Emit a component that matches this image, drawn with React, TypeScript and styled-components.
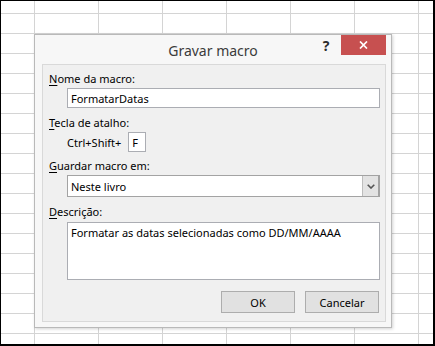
import styled, { createGlobalStyle } from "styled-components";

const GlobalStyle = createGlobalStyle`
  html, body {
    margin: 0;
    padding: 0;
    background: #ffffff;
  }
  body {
    font-family: "Noto Sans", "Open Sans", Arial, sans-serif;
    font-size: 11px;
    color: #000;
  }
`;

const Sheet = styled.div`
  box-sizing: border-box;
  width: 435px;
  height: 346px;
  border-style: solid;
  border-color: #000;
  border-width: 1px 2px 2px 1px;
  padding: 33px 0 0 33px;
  background-color: #fff;
  background-image: linear-gradient(to right, #d4d4d4 1px, transparent 1px),
    linear-gradient(to bottom, #d4d4d4 1px, transparent 1px);
  background-size: 64px 20px;
  background-position: 33px 12px;
  overflow: hidden;
`;

const Dialog = styled.div`
  box-sizing: border-box;
  width: 358px;
  height: 294px;
  display: flex;
  flex-direction: column;
  background: #f7f7f7;
  border: 1px solid #b9b9b9;
  box-shadow: 1px 1px 3px rgba(0, 0, 0, 0.18);
`;

const TitleBar = styled.div`
  height: 29px;
  display: grid;
  grid-template-columns: 1fr auto 1fr;
  align-items: start;
`;

const Title = styled.div`
  grid-column: 2;
  padding-top: 6px;
  font-size: 14px;
  line-height: 20px;
  color: #3b3b3b;
`;

const TitleControls = styled.div`
  grid-column: 3;
  display: flex;
  justify-content: flex-end;
  align-items: flex-start;
  padding-right: 5px;
`;

const HelpButton = styled.div`
  width: 16px;
  margin-right: 7px;
  padding-top: 3px;
  text-align: center;
  font-size: 14px;
  font-weight: bold;
  line-height: 16px;
  color: #2b2b2b;
`;

const CloseButton = styled.div`
  width: 45px;
  height: 20px;
  display: flex;
  align-items: center;
  justify-content: center;
  background: #c75050;
`;

const Panel = styled.div`
  box-sizing: border-box;
  width: 344px;
  height: 258px;
  margin: 0 5px 5px 7px;
  padding: 6px 5px 8px 6px;
  display: flex;
  flex-direction: column;
  background: #f0f0f0;
  border: 1px solid #d9d9d9;
`;

const Label = styled.div<{ $gap: number }>`
  margin-top: ${(p) => p.$gap}px;
  line-height: 16px;
  height: 16px;
  white-space: nowrap;
  u {
    text-decoration: underline;
    text-underline-offset: 2px;
  }
`;

const Field = styled.div<{ $gap: number; $height: number }>`
  box-sizing: border-box;
  margin: ${(p) => p.$gap}px 0 0 18px;
  height: ${(p) => p.$height}px;
  background: #fff;
  border: 1px solid #abadb3;
  padding: 0 3px;
  display: flex;
  align-items: center;
  white-space: nowrap;
`;

const TextArea = styled(Field)`
  align-items: flex-start;
  padding-top: 2px;
  line-height: 16px;
`;

const Combo = styled(Field)`
  padding-right: 0;
  border-color: #a3a3a3;
  border-right-width: 2px;
`;

const ComboText = styled.div`
  flex: 1;
`;

const ComboButton = styled.div`
  width: 15px;
  align-self: stretch;
  display: flex;
  align-items: center;
  justify-content: center;
  background: #e3e3e3;
  border-left: 1px solid #bdbdbd;
`;

const ShortcutRow = styled.div`
  margin: 1px 0 0 18px;
  display: flex;
  align-items: center;
  gap: 7px;
  height: 20px;
`;

const KeyBox = styled.div`
  box-sizing: border-box;
  width: 18px;
  height: 20px;
  padding-left: 3px;
  background: #fff;
  border: 1px solid #abadb3;
  display: flex;
  align-items: center;
`;

const ButtonRow = styled.div`
  margin-top: 11px;
  padding-right: 1px;
  display: flex;
  justify-content: flex-end;
  gap: 10px;
`;

const Button = styled.div`
  box-sizing: border-box;
  width: 74px;
  height: 22px;
  display: flex;
  align-items: center;
  justify-content: center;
  background: #e1e1e1;
  border: 1px solid #adadad;
`;

const App = () => {
  return (
    <>
      <GlobalStyle />
      <Sheet>
        <Dialog>
          <TitleBar>
            <Title>Gravar macro</Title>
            <TitleControls>
              <HelpButton>?</HelpButton>
              <CloseButton>
                <svg width="9" height="8" viewBox="0 0 9 8">
                  <path
                    d="M1 0.5 L8 7.5 M8 0.5 L1 7.5"
                    stroke="#fff"
                    strokeWidth="1.7"
                  />
                </svg>
              </CloseButton>
            </TitleControls>
          </TitleBar>
          <Panel>
            <Label $gap={0}>
              <u>N</u>ome da macro:
            </Label>
            <Field $gap={1} $height={20}>
              FormatarDatas
            </Field>
            <Label $gap={7}>
              <u>T</u>ecla de atalho:
            </Label>
            <ShortcutRow>
              <span>Ctrl+Shift+</span>
              <KeyBox>F</KeyBox>
            </ShortcutRow>
            <Label $gap={6}>
              <u>G</u>uardar macro em:
            </Label>
            <Combo $gap={1} $height={22}>
              <ComboText>Neste livro</ComboText>
              <ComboButton>
                <svg width="8" height="5" viewBox="0 0 8 5">
                  <path
                    d="M0.7 0.7 L4 4 L7.3 0.7"
                    stroke="#555"
                    strokeWidth="1.6"
                    fill="none"
                  />
                </svg>
              </ComboButton>
            </Combo>
            <Label $gap={7}>
              <u>D</u>escrição:
            </Label>
            <TextArea $gap={2} $height={58}>
              Formatar as datas selecionadas como DD/MM/AAAA
            </TextArea>
            <ButtonRow>
              <Button>OK</Button>
              <Button>Cancelar</Button>
            </ButtonRow>
          </Panel>
        </Dialog>
      </Sheet>
    </>
  );
};

export default App;
